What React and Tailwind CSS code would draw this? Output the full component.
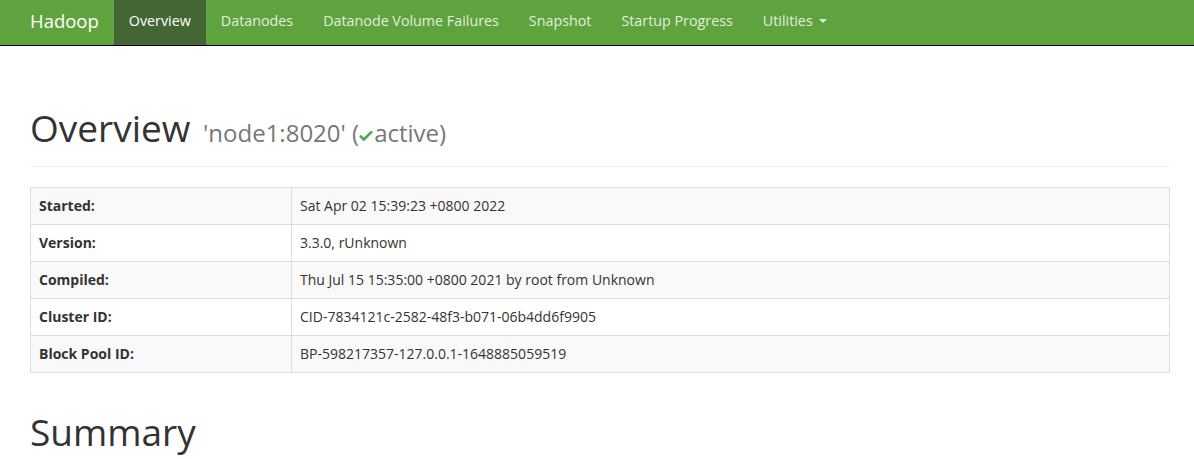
import React from 'react';

const navItems = ['Datanodes', 'Datanode Volume Failures', 'Snapshot', 'Startup Progress'];

const rows = [
  ['Started:', 'Sat Apr 02 15:39:23 +0800 2022'],
  ['Version:', '3.3.0, rUnknown'],
  ['Compiled:', 'Thu Jul 15 15:35:00 +0800 2021 by root from Unknown'],
  ['Cluster ID:', 'CID-7834121c-2582-48f3-b071-06b4dd6f9905'],
  ['Block Pool ID:', 'BP-598217357-127.0.0.1-1648885059519'],
];

export default function App() {
  return (
    <div className="min-h-[459px] bg-white text-[#333] text-[14px]" style={{ fontFamily: '"Open Sans", "Noto Sans", sans-serif' }}>
      {/* Navbar */}
      <nav className="h-[46px] bg-[#5fa33e] border-b border-black">
        <div className="flex h-[45px] pl-[15px]">
          <a className="flex items-center pb-[4px] px-[15px] text-[18.5px] text-white">Hadoop</a>
          <a className="flex items-center pb-[4px] px-[15px] text-[14.3px] bg-[#446633] text-white">Overview</a>
          {navItems.map((item) => (
            <a key={item} className="flex items-center pb-[4px] px-[15px] text-[14.3px] text-[#e2eedc]">
              {item}
            </a>
          ))}
          <a className="flex items-center pb-[4px] px-[15px] text-[14.3px] text-[#e2eedc]">
            Utilities
            <span className="ml-[6px] inline-block w-0 h-0 border-x-[4px] border-x-transparent border-t-[4px] border-t-[#e2eedc]" />
          </a>
        </div>
      </nav>

      <div className="px-[30px] w-[1200px]">
        {/* Page header */}
        <div className="mt-[62px] pb-[17px] mb-[20px] border-b border-[#eee] w-[1140px]">
          <h1 className="text-[37px] leading-[1.1] font-normal text-[#333]">
            Overview{' '}
            <small className="ml-[3px] text-[24px] text-[#777]">
              'node1:8020' (
              <svg className="inline-block w-[14px] h-[14px] align-[-1px] mr-[1px]" viewBox="0 0 16 16">
                <path d="M2 8.5 L5.5 12 L14 3.5" fill="none" stroke="#4ca64c" strokeWidth="3" strokeLinecap="round" strokeLinejoin="round" />
              </svg>
              active)
            </small>
          </h1>
        </div>

        {/* Info table */}
        <table className="w-[1140px] border-collapse border border-[#ddd]">
          <tbody>
            {rows.map(([label, value], i) => (
              <tr key={label} className={i % 2 === 0 ? 'bg-[#f9f9f9]' : 'bg-white'}>
                <th className="w-[261px] h-[37px] px-[8px] border border-[#ddd] text-left font-bold">{label}</th>
                <td className="h-[37px] px-[8px] border border-[#ddd]">{value}</td>
              </tr>
            ))}
          </tbody>
        </table>

        <h1 className="mt-[39px] text-[37px] leading-[1.1] font-normal text-[#333]">Summary</h1>
      </div>
    </div>
  );
}
